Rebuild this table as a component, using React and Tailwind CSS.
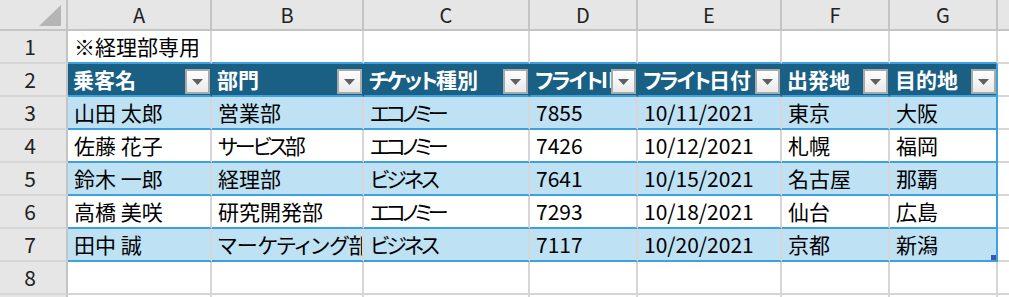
import React from "react";

const FONT = { fontFamily: '"Noto Sans CJK JP", "Noto Sans", sans-serif' };

const cols = [
  { w: "w-[144px]", letter: "A", head: "乗客名" },
  { w: "w-[152px]", letter: "B", head: "部門" },
  { w: "w-[166px]", letter: "C", head: "チケット種別" },
  { w: "w-[108px]", letter: "D", head: "フライトID" },
  { w: "w-[144px]", letter: "E", head: "フライト日付" },
  { w: "w-[108px]", letter: "F", head: "出発地" },
  { w: "w-[108px]", letter: "G", head: "目的地" },
];

const data = [
  ["山田 太郎", "営業部", "エコノミー", "7855", "10/11/2021", "東京", "大阪"],
  ["佐藤 花子", "サービス部", "エコノミー", "7426", "10/12/2021", "札幌", "福岡"],
  ["鈴木 一郎", "経理部", "ビジネス", "7641", "10/15/2021", "名古屋", "那覇"],
  ["高橋 美咲", "研究開発部", "エコノミー", "7293", "10/18/2021", "仙台", "広島"],
  ["田中 誠", "マーケティング部", "ビジネス", "7117", "10/20/2021", "京都", "新潟"],
];

const KANA = {
  "エコノミー": "tracking-[-4px]",
  "ビジネス": "tracking-[-3px]",
  "サービス": "tracking-[-3px]",
  "チケット": "tracking-[-2px]",
  "フライト": "tracking-[-2px]",
};

function Txt({ text }) {
  const parts = text.split(/(エコノミー|ビジネス|サービス|チケット|フライト)/);
  return (
    <span>
      {parts.map((p, i) =>
        KANA[p] ? (
          <span key={i} className={KANA[p]}>
            {p}
          </span>
        ) : (
          <React.Fragment key={i}>{p}</React.Fragment>
        )
      )}
    </span>
  );
}

function RowHeader({ n }) {
  return (
    <div className="flex h-full w-[68px] shrink-0 items-center justify-center border-r-2 border-b-2 border-r-[#c4c4c4] border-b-[#d6d6d6] bg-[#e6e6e6] pr-[6px] text-[21px] text-[#222]">
      {n}
    </div>
  );
}

function FilterButton() {
  return (
    <div className="absolute right-0 top-[5px] flex h-[25px] w-[25px] items-center justify-center border-2 border-[#a9a9a9] bg-gradient-to-b from-[#ffffff] to-[#e9e9e9]">
      <svg width="11" height="6" viewBox="0 0 11 6">
        <polygon points="0,0 11,0 5.5,6" fill="#606060" />
      </svg>
    </div>
  );
}

export default function App() {
  return (
    <div
      className="h-[297px] w-[1009px] overflow-hidden bg-white [font-feature-settings:'palt']"
      style={FONT}
    >
      {/* column headers */}
      <div className="flex h-[31px]">
        <div className="relative h-full w-[68px] shrink-0 border-r-2 border-b-2 border-r-[#c4c4c4] border-b-[#c4c4c4] bg-[#e6e6e6]">
          <svg className="absolute left-0 top-0" width="66" height="29" viewBox="0 0 66 29">
            <polygon points="61,5 61,26 39,26" fill="#b5b5b5" />
          </svg>
        </div>
        {cols.map((c) => (
          <div
            key={c.letter}
            className={`${c.w} flex h-full shrink-0 items-center justify-center border-r-2 border-b-2 border-r-[#c4c4c4] border-b-[#c4c4c4] bg-[#e6e6e6] text-[20px] text-[#222]`}
          >
            {c.letter}
          </div>
        ))}
        <div className="h-full flex-1 border-b-2 border-b-[#c4c4c4] bg-[#e6e6e6]" />
      </div>

      {/* row 1 */}
      <div className="flex h-[33px]">
        <RowHeader n="1" />
        {cols.map((c, i) => (
          <div
            key={c.letter}
            className={`${c.w} flex h-full shrink-0 items-center whitespace-nowrap border-r-2 border-b-2 border-r-[#d6d6d6] border-b-[#3ea0dc] pl-[6px] text-[21px] text-black`}
          >
            {i === 0 ? "※経理部専用" : ""}
          </div>
        ))}
        <div className="h-full flex-1 border-b-2 border-b-[#d6d6d6]" />
      </div>

      {/* row 2 - table header */}
      <div className="flex h-[33px]">
        <RowHeader n="2" />
        {cols.map((c, i) => (
          <div
            key={c.letter}
            className={`${c.w} relative flex h-full shrink-0 items-center overflow-hidden whitespace-nowrap border-b-2 border-r-2 border-b-[#3ea0dc] bg-[#1a5f84] pl-[5px] text-[21px] font-bold text-white ${
              i === 6 ? "border-r-[#3ea0dc]" : "border-r-[#1a5f84]"
            }`}
          >
            <Txt text={c.head} />
            <FilterButton />
          </div>
        ))}
        <div className="h-full flex-1 border-b-2 border-b-[#d6d6d6]" />
      </div>

      {/* data rows */}
      {data.map((row, r) => (
        <div key={r} className="flex h-[33px]">
          <RowHeader n={String(r + 3)} />
          {row.map((v, i) => (
            <div
              key={i}
              className={`${cols[i].w} relative flex h-full shrink-0 items-center overflow-hidden whitespace-nowrap border-b-2 border-r-2 border-b-[#3ea0dc] pl-[6px] text-[21px] text-black ${
                r % 2 === 0 ? "bg-[#bee1f4]" : "bg-white"
              } ${i === 6 ? "border-r-[#3ea0dc]" : "border-r-[#d6d6d6]"}`}
            >
              <Txt text={v} />
              {r === 4 && i === 6 ? (
                <div className="absolute bottom-0 right-0 h-[5px] w-[5px] bg-[#4353b5]" />
              ) : null}
            </div>
          ))}
          <div className="h-full flex-1 border-b-2 border-b-[#d6d6d6]" />
        </div>
      ))}

      {/* row 8 */}
      <div className="flex h-[33px]">
        <RowHeader n="8" />
        {cols.map((c) => (
          <div
            key={c.letter}
            className={`${c.w} h-full shrink-0 border-r-2 border-b-2 border-r-[#d6d6d6] border-b-[#d6d6d6]`}
          />
        ))}
        <div className="h-full flex-1 border-b-2 border-b-[#d6d6d6]" />
      </div>
      <div className="flex h-[33px]">
        <div className="h-full w-[68px] shrink-0 border-r-2 border-r-[#c4c4c4] bg-[#e6e6e6]" />
        {cols.map((c) => (
          <div
            key={c.letter}
            className={`${c.w} h-full shrink-0 border-r-2 border-r-[#d6d6d6]`}
          />
        ))}
      </div>
    </div>
  );
}
